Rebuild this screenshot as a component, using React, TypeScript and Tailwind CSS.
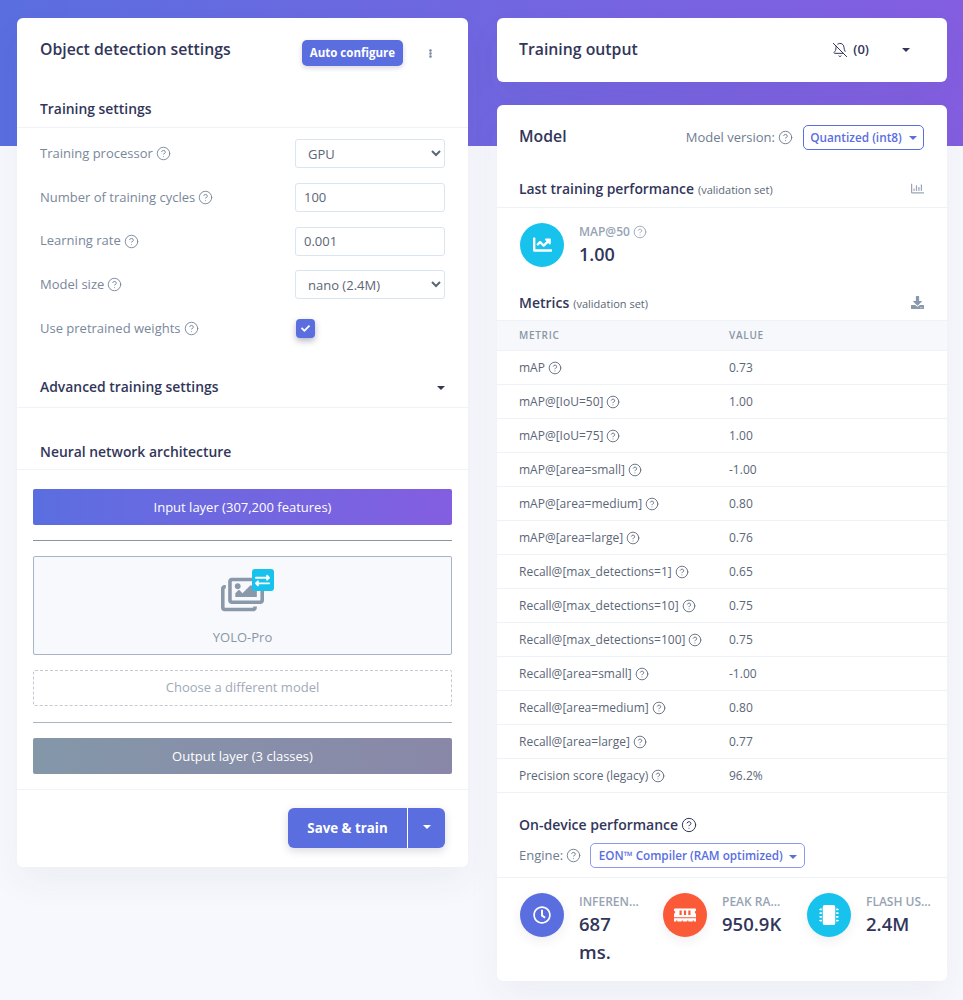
import { ReactNode } from "react";
import { BellOff, CircleHelp } from "lucide-react";
import {
  FaChartLine,
  FaCheck,
  FaDownload,
  FaEllipsisV,
  FaExchangeAlt,
  FaMemory,
  FaMicrochip,
  FaRegChartBar,
  FaRegClock,
  FaRegImages,
} from "react-icons/fa";

const metrics: [string, string][] = [
  ["mAP", "0.73"],
  ["mAP@[IoU=50]", "1.00"],
  ["mAP@[IoU=75]", "1.00"],
  ["mAP@[area=small]", "-1.00"],
  ["mAP@[area=medium]", "0.80"],
  ["mAP@[area=large]", "0.76"],
  ["Recall@[max_detections=1]", "0.65"],
  ["Recall@[max_detections=10]", "0.75"],
  ["Recall@[max_detections=100]", "0.75"],
  ["Recall@[area=small]", "-1.00"],
  ["Recall@[area=medium]", "0.80"],
  ["Recall@[area=large]", "0.77"],
  ["Precision score (legacy)", "96.2%"],
];

function Help({ size = 15 }: { size?: number }) {
  return <CircleHelp size={size} strokeWidth={1.5} className="ml-[3px] shrink-0" />;
}

function Caret({ className }: { className?: string }) {
  return <span className={`inline-block h-0 w-0 border-x-[4px] border-t-[4px] border-x-transparent border-t-current ${className ?? ""}`} />;
}

function Row({ label, children }: { label: string; children: ReactNode }) {
  return (
    <div className="flex h-[29px] items-center justify-between">
      <span className="flex items-center text-[13px] text-[#7a879b]">
        {label}
        <Help />
      </span>
      <div className="w-[150px]">{children}</div>
    </div>
  );
}

function SelectBox({ value }: { value: string }) {
  return (
    <select
      defaultValue={value}
      className="h-[29px] w-full rounded-[3px] border border-[#dbe5f0] bg-white pl-2 text-[13px] text-[#5b6677]"
    >
      <option>{value}</option>
    </select>
  );
}

function TextBox({ value }: { value: string }) {
  return (
    <input
      defaultValue={value}
      className="h-[29px] w-full rounded-[3px] border border-[#dbe5f0] bg-white px-2 text-[13px] text-[#5b6677]"
    />
  );
}

function Stat({
  color,
  icon,
  label,
  value,
  width,
}: {
  color: string;
  icon: ReactNode;
  label: string;
  value: string;
  width: string;
}) {
  return (
    <div className={`flex items-start ${width}`}>
      <div className={`flex size-[44px] shrink-0 items-center justify-center rounded-full text-white shadow-[0_4px_12px_rgba(50,50,93,0.08)] ${color}`}>
        {icon}
      </div>
      <div className="ml-[15px] min-w-0 flex-1">
        <div className="truncate text-[12px] leading-[18px] font-semibold text-[#97a3b4]">{label}</div>
        <div className="-mt-[1px] text-[18.5px] leading-[28px] font-semibold text-[#32365a]">{value}</div>
      </div>
    </div>
  );
}

export default function App() {
  return (
    <div className="min-h-[1000px] bg-[#f6f8fd] font-['Open_Sans',sans-serif]">
      <div className="h-[146px] bg-linear-to-r from-[#5a6ee0] to-[#835ee0]" />
      <div className="-mt-[146px] flex items-start gap-[29px] pt-[18px] pl-[17px]">
        {/* left column */}
        <div className="w-[451px] rounded-[6px] bg-white shadow-[0_15px_35px_rgba(50,50,93,0.05)]">
          <div className="flex h-[63px] items-start justify-between pt-[20px] pr-[33px] pl-[23px]">
            <h1 className="text-[15.8px] leading-[22px] font-semibold text-[#32365a]">Object detection settings</h1>
            <div className="mt-[2px] flex items-center">
              <button className="h-[26px] rounded-[5px] bg-[#5a6ee0] px-[8px] text-[11.5px] font-bold text-white shadow-[0_2px_5px_rgba(50,50,93,0.2)]">
                Auto configure
              </button>
              <FaEllipsisV size={9} className="ml-[23px] text-[#7a879b]" />
            </div>
          </div>
          <div className="border-b border-[#f0f3f8] px-[23px] pt-[18px] pb-[9px]">
            <h2 className="text-[13.9px] leading-[19px] font-semibold text-[#32365a]">Training settings</h2>
          </div>
          <div className="flex flex-col gap-[14.75px] pt-[11px] pr-[23px] pl-[23px]">
            <Row label="Training processor">
              <SelectBox value="GPU" />
            </Row>
            <Row label="Number of training cycles">
              <TextBox value="100" />
            </Row>
            <Row label="Learning rate">
              <TextBox value="0.001" />
            </Row>
            <Row label="Model size">
              <SelectBox value="nano (2.4M)" />
            </Row>
            <Row label="Use pretrained weights">
              <div className="ml-px flex size-[19px] items-center justify-center rounded-[4px] bg-[#5a6ee0] text-white shadow-[0_3px_6px_rgba(50,50,93,0.35)]">
                <FaCheck size={9} />
              </div>
            </Row>
          </div>
          <div className="mt-[34px] flex items-center justify-between border-b border-[#f0f3f8] pr-[23px] pb-[11px] pl-[23px]">
            <h2 className="text-[13.9px] leading-[19px] font-semibold text-[#32365a]">Advanced training settings</h2>
            <Caret className="mt-[3px] text-[#32365a]" />
          </div>
          <div className="border-b border-[#f0f3f8] px-[23px] pt-[34px] pb-[8px]">
            <h2 className="text-[13.9px] leading-[19px] font-semibold text-[#32365a]">Neural network architecture</h2>
          </div>
          <div className="flex flex-col px-[16px] pt-[19px] pb-[15px]">
            <div className="flex h-[36px] items-center justify-center rounded-[2px] bg-linear-to-r from-[#5a6ee0] to-[#835ee0] pt-px text-[13px] text-white">
              Input layer (307,200 features)
            </div>
            <div className="my-[15px] h-px bg-[#8a94a6]" />
            <div className="flex h-[99px] flex-col items-center rounded-[2px] border border-[#a9b5c4] bg-[#f7f9fc]">
              <div className="relative mt-[18px] ml-[8px] h-[38px] w-[52px]">
                <FaRegImages size={43} className="absolute -top-[2px] left-0 text-[#8a99aa]" />
                <div className="absolute -top-[6px] right-[-1px] flex size-[22px] items-center justify-center rounded-[3px] bg-[#17c3ec] text-white">
                  <FaExchangeAlt size={15} />
                </div>
              </div>
              <span className="mt-[15px] text-[13px] text-[#8a96a6]">YOLO-Pro</span>
            </div>
            <div className="mt-[15px] flex h-[36px] items-center justify-center rounded-[2px] border border-dashed border-[#c3cad4] text-[13px] text-[#a0aab8]">
              Choose a different model
            </div>
            <div className="mt-[16px] mb-[15px] h-px bg-[#aab6bc]" />
            <div className="flex h-[36px] items-center justify-center rounded-[2px] bg-linear-to-r from-[#8497a9] to-[#8987a8] pt-px text-[13px] text-white">
              Output layer (3 classes)
            </div>
          </div>
          <div className="flex justify-end border-t border-[#f0f3f8] pt-[18px] pr-[23px] pb-[19px]">
            <div className="flex h-[40px] overflow-hidden rounded-[6px] bg-[#5a6ee0] text-white shadow-[0_3px_8px_rgba(50,50,93,0.18)]">
              <span className="flex w-[120px] items-center justify-center border-r border-white pt-px text-[13.3px] font-bold">Save &amp; train</span>
              <span className="flex w-[37px] items-center justify-center pb-[2px]">
                <Caret />
              </span>
            </div>
          </div>
        </div>

        {/* right column */}
        <div className="flex w-[450px] flex-col gap-[23px]">
          <div className="flex h-[64px] items-center rounded-[6px] bg-white pr-[37px] pl-[22px] shadow-[0_15px_35px_rgba(50,50,93,0.05)]">
            <h1 className="flex-1 text-[15.8px] font-semibold text-[#32365a]">Training output</h1>
            <BellOff size={16} strokeWidth={1.5} className="text-[#32365a]" />
            <span className="ml-[5px] text-[13px] font-semibold text-[#32365a]">(0)</span>
            <Caret className="ml-[33px] text-[#32365a]" />
          </div>

          <div className="rounded-[6px] bg-white shadow-[0_15px_35px_rgba(50,50,93,0.05)]">
            <div className="flex items-center justify-between pt-[20px] pr-[23px] pl-[22px]">
              <h1 className="-mt-[2px] text-[15.8px] font-semibold text-[#32365a]">Model</h1>
              <div className="flex items-center">
                <span className="text-[13px] text-[#6f7c90]">Model version:</span>
                <span className="text-[#6f7c90]">
                  <Help />
                </span>
                <button className="ml-[10px] flex h-[25px] w-[121px] items-center justify-center rounded-[5px] border border-[#5a6ee0] text-[11.8px] font-semibold text-[#5a6ee0]">
                  Quantized (int8)
                  <Caret className="ml-[7px]" />
                </button>
              </div>
            </div>

            <div className="mt-[29px] flex items-center justify-between border-b border-[#eef1f6] pr-[23px] pb-[8px] pl-[22px]">
              <div className="flex items-baseline">
                <h2 className="text-[13.9px] leading-[19px] font-semibold text-[#32365a]">Last training performance</h2>
                <span className="ml-[4px] text-[11px] text-[#5b6677]">(validation set)</span>
              </div>
              <FaRegChartBar size={13} className="text-[#9aa6b6]" />
            </div>

            <div className="flex items-start pt-[15px] pl-[23px]">
              <div className="flex size-[44px] items-center justify-center rounded-full bg-[#17c3ec] text-white">
                <FaChartLine size={19} />
              </div>
              <div className="ml-[15px]">
                <div className="flex items-center text-[12px] leading-[18px] font-semibold text-[#97a3b4]">
                  MAP@50
                  <Help size={14} />
                </div>
                <div className="-mt-[1px] text-[18px] leading-[28px] font-semibold text-[#32365a]">1.00</div>
              </div>
            </div>

            <div className="mt-[25px] flex items-center justify-between pr-[23px] pl-[22px]">
              <div className="flex items-baseline">
                <h2 className="text-[14px] leading-[19px] font-semibold text-[#32365a]">Metrics</h2>
                <span className="ml-[4px] text-[11px] text-[#5b6677]">(validation set)</span>
              </div>
              <FaDownload size={13} className="text-[#8a99aa]" />
            </div>

            <div className="mt-[8px] grid h-[31px] grid-cols-[210px_1fr] items-center border-y border-[#eef1f6] bg-[#f6f8fb] pb-px pl-[22px] text-[10px] font-semibold tracking-[0.07em] text-[#8a96a6]">
              <span>METRIC</span>
              <span>VALUE</span>
            </div>
            {metrics.map(([name, value]) => (
              <div key={name} className="grid h-[34px] grid-cols-[210px_1fr] items-center border-b border-[#eef1f6] pl-[22px] text-[12px] text-[#5b6677]">
                <span className="flex items-center">
                  {name}
                  <Help size={14} />
                </span>
                <span>{value}</span>
              </div>
            ))}

            <div className="mt-[22px] flex items-center pl-[22px] text-[14px] leading-[20px] font-semibold text-[#32365a]">
              On-device performance
              <Help size={16} />
            </div>
            <div className="mt-[8px] flex items-center border-b border-[#eef1f6] pb-[9px] pl-[22px]">
              <span className="text-[13px] text-[#6f7c90]">Engine:</span>
              <span className="text-[#6f7c90]">
                <Help />
              </span>
              <button className="ml-[9px] flex h-[25px] w-[215px] items-center justify-center rounded-[5px] border border-[#8e9bea] text-[11.7px] font-semibold text-[#5a6ee0]">
                EON™ Compiler (RAM optimized)
                <Caret className="mt-[2px] ml-[6px]" />
              </button>
            </div>
            <div className="flex items-start gap-[22px] pt-[15px] pb-[15px] pl-[23px]">
              <Stat width="w-[121px]" color="bg-[#5a6ee0]" icon={<FaRegClock size={18} />} label="INFERENCING TIME" value="687 ms." />
              <Stat width="w-[122px]" color="bg-[#fa5a37]" icon={<FaMemory size={22} />} label="PEAK RAM USAGE" value="950.9K" />
              <Stat width="w-[125px]" color="bg-[#17c3ec]" icon={<FaMicrochip size={20} />} label="FLASH USAGE" value="2.4M" />
            </div>
          </div>
        </div>
      </div>
    </div>
  );
}
